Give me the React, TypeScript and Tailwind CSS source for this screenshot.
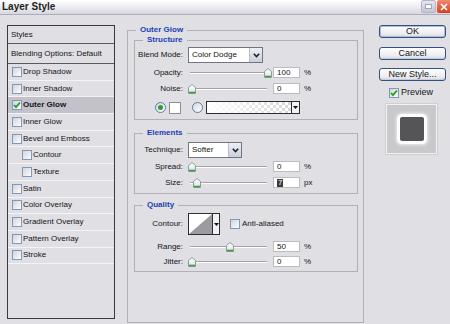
import React from "react";

type Item = { label: string; checked?: boolean; selected?: boolean; indent?: boolean };

const items: Item[] = [
  { label: "Drop Shadow" },
  { label: "Inner Shadow" },
  { label: "Outer Glow", checked: true, selected: true },
  { label: "Inner Glow" },
  { label: "Bevel and Emboss" },
  { label: "Contour", indent: true },
  { label: "Texture", indent: true },
  { label: "Satin" },
  { label: "Color Overlay" },
  { label: "Gradient Overlay" },
  { label: "Pattern Overlay" },
  { label: "Stroke" },
];

const Check = ({ checked = false }: { checked?: boolean }) => (
  <span className="w-[10px] h-[10px] shrink-0 border border-[#7d99bd] bg-[linear-gradient(135deg,#d4d4d8,#fdfdfd)] flex items-center justify-center">
    {checked && (
      <svg width="8" height="8" viewBox="0 0 8 8">
        <path d="M1 4 L3 6.2 L7 1.5" stroke="#21a121" strokeWidth="1.8" fill="none" />
      </svg>
    )}
  </span>
);

const Radio = ({ on = false }: { on?: boolean }) => (
  <span className="w-[11px] h-[11px] shrink-0 rounded-full border border-[#5b7ca6] bg-[linear-gradient(135deg,#d8d8dc,#ffffff)] flex items-center justify-center">
    {on && <span className="w-[5px] h-[5px] rounded-full bg-[#2ba12b]" />}
  </span>
);

const Thumb = () => (
  <svg width="8" height="10" viewBox="0 0 8 10">
    <defs>
      <linearGradient id="tg" x1="0" y1="0" x2="0" y2="1">
        <stop offset="0" stopColor="#ffffff" />
        <stop offset="1" stopColor="#dfe3e6" />
      </linearGradient>
    </defs>
    <path d="M0.5 3.5 L4 0.5 L7.5 3.5 L7.5 9.5 L0.5 9.5 Z" fill="url(#tg)" stroke="#8a9aa4" />
    <path d="M1 8.5 L7 8.5" stroke="#3aa33a" strokeWidth="1.6" />
  </svg>
);

const Slider = ({ pos }: { pos: number }) => (
  <div className="relative w-[85px] h-[11px] shrink-0">
    <div className="absolute left-[2px] w-[77px] top-[5px] h-[2px] border-t border-[#a3a3a8] bg-white" />
    <div className="absolute top-[1px] flex" style={{ left: pos }}>
      <Thumb />
    </div>
  </div>
);

const Field = ({ value, unit, sel }: { value: string; unit: string; sel?: boolean }) => (
  <>
    <div className="w-[27px] h-[11px] shrink-0 bg-white border border-[#b8bcc4] flex items-center pl-[3px] leading-none">
      {sel ? <span className="bg-[#3a3a3a] text-white px-[1px]">{value}</span> : value}
    </div>
    <span className="ml-[4px]">{unit}</span>
  </>
);

const Row = ({ label, className, children }: { label: string; className: string; children: React.ReactNode }) => (
  <div className={`flex items-center ${className}`}>
    <span className="w-[48px] shrink-0 text-right">{label}</span>
    <div className="ml-[5px] flex items-center">{children}</div>
  </div>
);

const Arrow = () => (
  <svg width="5" height="3" viewBox="0 0 5 3">
    <path d="M0 0 L5 0 L2.5 3 Z" fill="#111" />
  </svg>
);

const Select = ({ value, className }: { value: string; className: string }) => (
  <div className={`flex h-[16px] bg-white border border-[#6f7680] ${className}`}>
    <span className="flex-1 pl-[3px] flex items-center">{value}</span>
    <span className="w-[13px] border-l border-[#b6bccb] bg-[linear-gradient(#eef0f6,#c9cfdd)] flex items-center justify-center">
      <svg width="7" height="5" viewBox="0 0 7 5">
        <path d="M0.8 0.8 L3.5 3.6 L6.2 0.8" stroke="#222" strokeWidth="1.6" fill="none" />
      </svg>
    </span>
  </div>
);

const Group = ({ title, className, children }: { title: string; className: string; children: React.ReactNode }) => (
  <fieldset className={`border border-[#b1b0b6] ${className}`}>
    <legend className="ml-[8px] px-[4px] leading-[10px] font-bold text-[#1b3fb5]">{title}</legend>
    {children}
  </fieldset>
);

const Btn = ({ children, def = false }: { children: React.ReactNode; def?: boolean }) => (
  <div
    className={`h-[13px] w-[67px] rounded-[3px] border border-[#35507e] bg-[linear-gradient(#ffffff,#ececf0_70%,#d6d6de)] flex items-center justify-center text-[9px] leading-none ${
      def ? "shadow-[inset_0_0_0_1px_#a9bde6]" : "shadow-[inset_0_-1px_0_#c4cce0]"
    }`}
  >
    {children}
  </div>
);

export default function App() {
  return (
    <div className="w-[450px] h-[324px] overflow-hidden bg-[#e0dfe4] text-[8px] text-[#141414] font-['Liberation_Sans',Arial,sans-serif]">
      {/* title bar */}
      <div className="h-[15px] flex border-b border-[#aeaeb6] bg-[linear-gradient(#ffffff,#f1f1f5_40%,#d6d6de)]">
        <span className="pl-[2px] text-[10px] font-bold leading-[14px] text-[#1e1e1e]">Layer Style</span>
        <div className="ml-auto flex h-[13px]">
          <div className="w-[15px] rounded-[2px] border border-[#b2b6c8] bg-[linear-gradient(#e4e6f0,#c2c6d8)] flex items-center justify-center">
            <span className="w-[7px] h-[5px] bg-white border border-[#9ea3b8]" />
          </div>
          <div className="ml-[1px] w-[13px] rounded-l-[2px] bg-[linear-gradient(#ef8a72,#d4401f)] flex items-center justify-center">
            <svg width="8" height="8" viewBox="0 0 8 8">
              <path d="M1 1 L7 7 M7 1 L1 7" stroke="#fff" strokeWidth="1.6" />
            </svg>
          </div>
        </div>
      </div>

      <div className="flex pt-[10px] pl-[7px]">
        {/* styles list */}
        <div className="w-[108px] h-[294px] shrink-0 border border-[#3a3a3e] flex flex-col">
          <div className="h-[18px] border-b border-[#5a5a60] pl-[3px] flex items-center">Styles</div>
          <div className="h-[20px] border-b border-[#5a5a60] pl-[3px] flex items-center">Blending Options: Default</div>
          {items.map((it) => (
            <div
              key={it.label}
              className={`h-[16.7px] border-b border-[#f4f4f7] flex items-center ${it.indent ? "pl-[14px]" : "pl-[4px]"} ${
                it.selected ? "bg-[#c3c2cb] font-bold" : ""
              }`}
            >
              <Check checked={it.checked} />
              <span className="ml-[1px]">{it.label}</span>
            </div>
          ))}
        </div>

        {/* main frame */}
        <fieldset className="ml-[12px] w-[237px] h-[298px] shrink-0 border border-[#b1b0b6] pl-[6px] pr-[5px]">
          <legend className="ml-[2px] px-[4px] leading-[10px] font-bold text-[#1b3fb5]">Outer Glow</legend>

          <Group title="Structure" className="pb-[5px]">
            <Row label="Blend Mode:" className="mt-[2px] h-[16px]">
              <Select value="Color Dodge" className="w-[75px]" />
            </Row>
            <Row label="Opacity:" className="mt-[4px] h-[11px]">
              <Slider pos={76} />
              <Field value="100" unit="%" />
            </Row>
            <Row label="Noise:" className="mt-[5px] h-[11px]">
              <Slider pos={0} />
              <Field value="0" unit="%" />
            </Row>
            <div className="mt-[7px] h-[13px] flex items-center pl-[20px]">
              <Radio on />
              <span className="ml-[3px] w-[12px] h-[12px] bg-white border border-[#8c8c92]" />
              <span className="ml-[11px]">
                <Radio />
              </span>
              <div className="ml-[3px] w-[94px] h-[13px] flex border border-[#2e2e32]">
                <span className="flex-1 bg-[linear-gradient(to_right,#ffffff,rgba(255,255,255,0)),repeating-conic-gradient(#d6d6d8_0%_25%,#ffffff_0%_50%)] bg-[length:100%_100%,6px_6px]" />
                <span className="w-[8px] border-l border-[#2e2e32] bg-[#f2f2f4] flex items-center justify-center">
                  <Arrow />
                </span>
              </div>
            </div>
          </Group>

          <Group title="Elements" className="mt-[8px] pb-[5px]">
            <Row label="Technique:" className="mt-[4px] h-[16px]">
              <Select value="Softer" className="w-[54px]" />
            </Row>
            <Row label="Spread:" className="mt-[3px] h-[11px]">
              <Slider pos={0} />
              <Field value="0" unit="%" />
            </Row>
            <Row label="Size:" className="mt-[5px] h-[11px]">
              <Slider pos={5} />
              <Field value="7" unit="px" sel />
            </Row>
          </Group>

          <Group title="Quality" className="mt-[6px] pb-[4px]">
            <Row label="Contour:" className="mt-[3px] h-[22px]">
              <div className="w-[32px] h-[22px] flex border border-[#2e2e32] bg-white">
                <svg width="23" height="20" viewBox="0 0 23 20" className="shrink-0">
                  <path d="M0 20 L23 0 L23 20 Z" fill="#9c9ca0" />
                </svg>
                <span className="flex-1 border-l border-[#2e2e32] bg-[#f2f2f4] flex items-center justify-center">
                  <Arrow />
                </span>
              </div>
              <span className="ml-[10px]">
                <Check />
              </span>
              <span className="ml-[2px]">Anti-aliased</span>
            </Row>
            <Row label="Range:" className="mt-[6px] h-[11px]">
              <Slider pos={38} />
              <Field value="50" unit="%" />
            </Row>
            <Row label="Jitter:" className="mt-[4px] h-[11px]">
              <Slider pos={0} />
              <Field value="0" unit="%" />
            </Row>
          </Group>
        </fieldset>

        {/* buttons */}
        <div className="ml-[15px] flex flex-col">
          <Btn def>OK</Btn>
          <div className="mt-[9px]">
            <Btn>Cancel</Btn>
          </div>
          <div className="mt-[8px]">
            <Btn>New Style...</Btn>
          </div>
          <div className="mt-[7px] h-[10px] pl-[10px] flex items-center text-[9px]">
            <Check checked />
            <span className="ml-[2px]">Preview</span>
          </div>
          <div className="mt-[6px] ml-[7px] w-[51px] h-[50px] border border-[#f2f2f4] bg-[#c9c9cc] shadow-[0_0_0_1px_#cfcfd3] flex items-center justify-center">
            <div className="w-[24px] h-[24px] rounded-[2px] bg-[#555557] shadow-[0_0_0_3px_#ffffff,0_0_3px_4px_#ececef]" />
          </div>
        </div>
      </div>
    </div>
  );
}
